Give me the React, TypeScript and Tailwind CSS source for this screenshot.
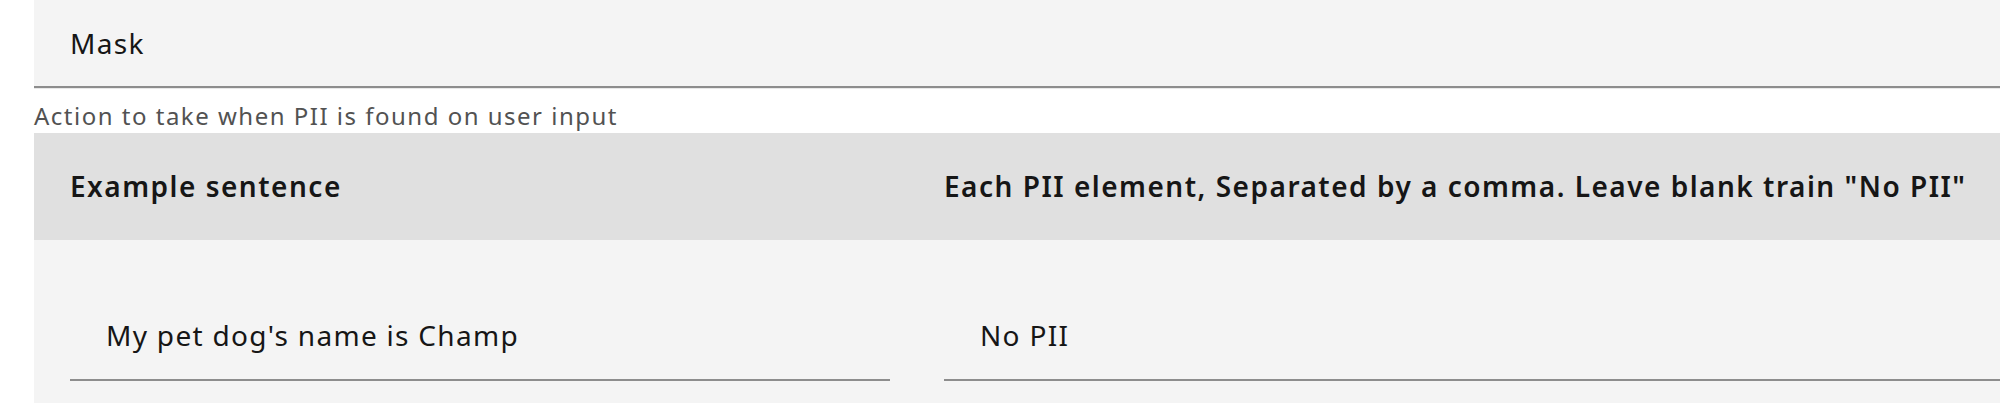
import React from "react";

export default function App() {
  return (
    <div className="w-[2000px] h-[403px] overflow-hidden bg-white font-['Noto_Sans',sans-serif] text-[#161616]">
      <div className="pl-[34px]">
        <div className="h-[88px] bg-[#f4f4f4] border-b-2 border-[#8d8d8d] flex items-center pl-[36px] text-[28px] tracking-[1.3px]">
          Mask
        </div>
        <div className="h-[1px] bg-[#e8e8e8]" />
        <div className="h-[44px] flex items-center pt-[10px] text-[24px] text-[#525252] tracking-[1.5px] leading-[32px] whitespace-nowrap">
          Action to take when PII is found on user input
        </div>
        <div className="grid grid-cols-[874px_1fr]">
          <div className="h-[107px] bg-[#e0e0e0] flex items-center pb-[2px] pl-[36px] text-[28px] font-semibold tracking-[1.5px] whitespace-nowrap">
            Example sentence
          </div>
          <div className="h-[107px] bg-[#e0e0e0] flex items-center pb-[2px] pl-[36px] text-[28px] font-semibold tracking-[1.5px] whitespace-nowrap">
            Each PII element, Separated by a comma. Leave blank train "No PII"
          </div>
          <div className="bg-[#f4f4f4] pt-[59px] pl-[36px] pr-[18px] h-[163px]">
            <div className="h-[82px] border-b-2 border-[#8d8d8d] flex items-center pb-[8px] pl-[36px] text-[28px] tracking-[1.3px] whitespace-nowrap">
              My pet dog's name is Champ
            </div>
          </div>
          <div className="bg-[#f4f4f4] pt-[59px] pl-[36px] h-[163px]">
            <div className="h-[82px] border-b-2 border-[#8d8d8d] flex items-center pb-[8px] pl-[36px] text-[28px] tracking-[1.3px] whitespace-nowrap">
              No PII
            </div>
          </div>
        </div>
      </div>
    </div>
  );
}
